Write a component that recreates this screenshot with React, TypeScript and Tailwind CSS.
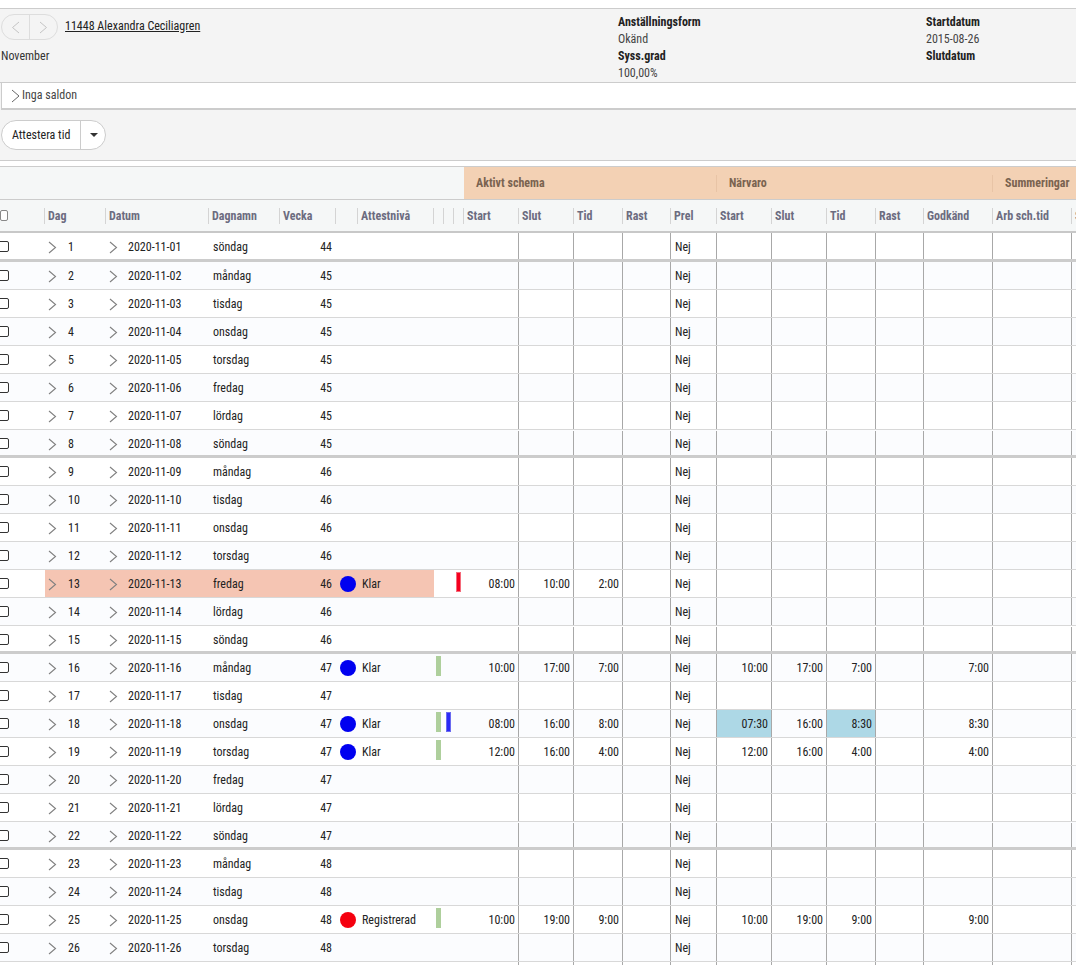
const gridCols =
  "grid grid-cols-[45px_61px_103px_71px_56px_22px_76px_10px_10px_10px_55px_55px_49px_48px_46px_55px_55px_49px_48px_69px_79px_20px]"

const dayNames = ["söndag", "måndag", "tisdag", "onsdag", "torsdag", "fredag", "lördag"]

interface Special {
  level: string
  dot: string
  green?: boolean
  blue?: boolean
  red?: boolean
  schema: string[]
  narvaro?: string[]
  godkand?: string
  changed?: boolean
}

const specials: Record<number, Special> = {
  13: { level: "Klar", dot: "bg-[#0000f0]", red: true, schema: ["08:00", "10:00", "2:00"] },
  16: { level: "Klar", dot: "bg-[#0000f0]", green: true, schema: ["10:00", "17:00", "7:00"], narvaro: ["10:00", "17:00", "7:00"], godkand: "7:00" },
  18: { level: "Klar", dot: "bg-[#0000f0]", green: true, blue: true, schema: ["08:00", "16:00", "8:00"], narvaro: ["07:30", "16:00", "8:30"], godkand: "8:30", changed: true },
  19: { level: "Klar", dot: "bg-[#0000f0]", green: true, schema: ["12:00", "16:00", "4:00"], narvaro: ["12:00", "16:00", "4:00"], godkand: "4:00" },
  25: { level: "Registrerad", dot: "bg-[#f5000f]", green: true, schema: ["10:00", "19:00", "9:00"], narvaro: ["10:00", "19:00", "9:00"], godkand: "9:00" },
}

const headers = ["Dag", "Datum", "Dagnamn", "Vecka", "", "Attestnivå", "", "", "", "Start", "Slut", "Tid", "Rast", "Prel", "Start", "Slut", "Tid", "Rast", "Godkänd", "Arb sch.tid", "S"]

function Chevron({ className }: { className: string }) {
  return (
    <svg width="9" height="13" viewBox="0 0 9 13" fill="none" className={className}>
      <path d="M1 1l6.5 5.5L1 12" stroke="#808080" strokeWidth="1.1" />
    </svg>
  )
}

function TimeCell({ value, hl }: { value?: string; hl?: boolean }) {
  return (
    <div className={`flex items-center justify-end border-r border-[#a8a8a8] pr-[3px] pt-[2px] ${hl ? "bg-[#add8e6]" : ""}`}>
      {value}
    </div>
  )
}

function Row({ day }: { day: number }) {
  const s = specials[day]
  const weekEnd = (day - 1) % 7 === 0
  const tint = day % 2 === 0 ? "bg-[#fbfcfe]" : "bg-white"
  const mark = day === 13 ? "bg-[#f5c5b3]" : ""
  return (
    <div className={`${gridCols} ${day === 1 ? "h-[29px]" : "h-[28px]"} ${tint} ${weekEnd ? "border-b-[3px] border-[#cccccc]" : "border-b border-[#d8d8d8]"} ${weekEnd && day > 1 ? "pt-[1px]" : ""}`}>
      <div className="flex items-center">
        <div className="ml-[-3px] h-[11px] w-[12px] rounded-[2px] border border-[#333333] bg-white" />
      </div>
      <div className={`flex items-center pl-[3px] pt-[2px] ${mark}`}>
        <Chevron className="shrink-0" />
        <span className="ml-[11px]">{day}</span>
      </div>
      <div className={`flex items-center pl-[3px] pt-[2px] ${mark}`}>
        <Chevron className="shrink-0" />
        <span className="ml-[10px]">2020-11-{String(day).padStart(2, "0")}</span>
      </div>
      <div className={`flex items-center pl-[4px] pt-[2px] ${mark}`}>{dayNames[(day - 1) % 7]}</div>
      <div className={`flex items-center justify-end pr-[4px] pt-[2px] ${mark}`}>{day === 1 ? 44 : 45 + Math.floor((day - 2) / 7)}</div>
      <div className={`flex items-center pl-[4px] ${mark}`}>
        {s && <div className={`h-[16px] w-[16px] rounded-full ${s.dot}`} />}
      </div>
      <div className={`flex items-center pl-[4px] pt-[2px] ${mark}`}>{s?.level}</div>
      <div className="pl-[2px] pt-[2px]">{s?.green && <div className="h-[20px] w-[5px] bg-[#aecf9c]" />}</div>
      <div className="pl-[2px] pt-[2px]">{s?.blue && <div className="h-[20px] w-[5px] border border-[#6a6af0] bg-[#2a2af5]" />}</div>
      <div className="pl-[2px] pt-[2px]">{s?.red && <div className="h-[20px] w-[5px] border border-[#f56a7a] bg-[#f5001e]" />}</div>
      <TimeCell value={s?.schema[0]} />
      <TimeCell value={s?.schema[1]} />
      <TimeCell value={s?.schema[2]} />
      <TimeCell />
      <div className="flex items-center border-r border-[#a8a8a8] pl-[4px] pt-[2px]">Nej</div>
      <TimeCell value={s?.narvaro?.[0]} hl={s?.changed} />
      <TimeCell value={s?.narvaro?.[1]} />
      <TimeCell value={s?.narvaro?.[2]} hl={s?.changed} />
      <TimeCell />
      <TimeCell value={s?.godkand} />
      <TimeCell />
      <div />
    </div>
  )
}

export default function App() {
  const days = Array.from({ length: 26 }, (_, i) => i + 1)
  const tailCells = Array.from({ length: 11 }, (_, i) => i)
  return (
    <div className="h-[965px] w-[1076px] overflow-hidden bg-white font-['Roboto',sans-serif] text-[12px] leading-[17px] text-[#222222] [font-stretch:condensed]">
      <div className="mt-[8px] h-[75px] border-y border-[#cccccc] bg-[#f4f4f4] flex">
        <div className="w-[617px] shrink-0">
          <div className="mt-[5px] flex items-center pl-[1px]">
            <div className="flex h-[26px] w-[57px] items-center rounded-full border border-[#dddddd]">
              <div className="flex h-full w-[28px] items-center justify-center border-r border-[#dddddd]">
                <svg width="9" height="13" viewBox="0 0 9 13" fill="none"><path d="M8 1L1.5 6.5 8 12" stroke="#c4c4c4" /></svg>
              </div>
              <div className="flex h-full flex-1 items-center justify-center">
                <svg width="9" height="13" viewBox="0 0 9 13" fill="none"><path d="M1 1l6.5 5.5L1 12" stroke="#c4c4c4" /></svg>
              </div>
            </div>
            <a className="ml-[7px] mb-[2px] underline">11448 Alexandra Ceciliagren</a>
          </div>
          <div className="mt-[8px] pl-[1px] text-[#333333]">November</div>
        </div>
        <div className="w-[308px] shrink-0 pt-[5px] pl-[1px]">
          <div className="font-bold">Anställningsform</div>
          <div className="text-[#444444]">Okänd</div>
          <div className="font-bold">Syss.grad</div>
          <div className="text-[#444444]">100,00%</div>
        </div>
        <div className="pt-[5px] pl-[1px]">
          <div className="font-bold">Startdatum</div>
          <div className="text-[#444444]">2015-08-26</div>
          <div className="font-bold">Slutdatum</div>
        </div>
      </div>

      <div className="h-[77px] bg-[#f4f4f4]">
        <div className="ml-[1px] flex h-[27px] items-center border-b-2 border-l border-[#cccccc] bg-white pl-[9px] text-[#444444]">
          <svg width="10" height="14" viewBox="0 0 10 14" fill="none"><path d="M1 1l7 6-7 6" stroke="#666666" /></svg>
          <span className="ml-[1px]">Inga saldon</span>
        </div>
        <div className="ml-[1px] mt-[10px] flex h-[30px] w-[105px] items-center rounded-full border border-[#cccccc] bg-white">
          <div className="flex h-full w-[79px] items-center border-r border-[#cccccc] pl-[10px]">Attestera tid</div>
          <div className="h-0 w-0 ml-[9px] border-x-[4px] border-t-[4px] border-x-transparent border-t-[#333333]" />
        </div>
      </div>

      <div className="h-[6px] border-t border-[#cccccc] bg-white" />

      <div className="flex h-[34px] border-y border-[#cccccc] bg-[#f5f7f7] font-bold">
        <div className="w-[464px] shrink-0" />
        <div className="flex flex-1 items-center bg-[#f3d1b4] text-[#7a6350]">
          <div className="w-[252px] pl-[12px]">Aktivt schema</div>
          <div className="w-[276px] border-l border-[#e8c4a6] pl-[12px]">Närvaro</div>
          <div className="flex-1 whitespace-nowrap border-l border-[#e8c4a6] pl-[12px]">Summeringar</div>
        </div>
      </div>

      <div className={`${gridCols} h-[33px] border-b-2 border-[#c8c8c8] bg-[#f5f7f7] font-bold text-[#6c6c80]`}>
        <div className="flex items-center justify-end">
          <div className="mr-[36px] h-[11px] w-[12px] rounded-[2px] border border-[#888888] bg-white" />
          <div className="h-[16px] border-r border-[#d4d4d4]" />
        </div>
        {headers.map((h, i) => (
          <div key={i} className="flex items-center justify-between overflow-hidden whitespace-nowrap pl-[3px] pt-[1px]">
            <span>{h}</span>
            <div className="h-[16px] shrink-0 border-r border-[#d4d4d4]" />
          </div>
        ))}
      </div>

      {days.map((d) => (
        <Row key={d} day={d} />
      ))}
      <div className={`${gridCols} h-[28px] bg-white`}>
        <div className="col-span-10" />
        {tailCells.map((i) => (
          <div key={i} className="border-r border-[#a8a8a8]" />
        ))}
      </div>
    </div>
  )
}
